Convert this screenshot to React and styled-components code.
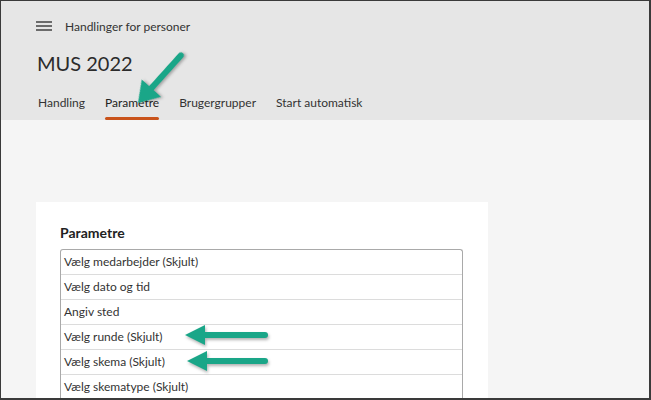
import React from 'react'
import styled, { createGlobalStyle } from 'styled-components'

const Global = createGlobalStyle`
  html, body { margin: 0; padding: 0; }
  body {
    font-family: Lato, "Liberation Sans", sans-serif;
    color: #333;
  }
`

const tabs = ['Handling', 'Parametre', 'Brugergrupper', 'Start automatisk']
const params = [
  'Vælg medarbejder (Skjult)',
  'Vælg dato og tid',
  'Angiv sted',
  'Vælg runde (Skjult)',
  'Vælg skema (Skjult)',
  'Vælg skematype (Skjult)',
]

function Arrow({ x, y, length, angle = 0, head = 20 }) {
  const h = head / 2
  return (
    <ArrowSvg
      width={length + 6}
      height={26}
      style={{ left: x - 2, top: y - 13, transform: `rotate(${angle}deg)` }}
    >
      <line x1="20" y1="13" x2={length - 1} y2="13" />
      <polygon points={`2,13 22,${13 - h} 22,${13 + h}`} />
    </ArrowSvg>
  )
}

function App() {
  return (
    <>
      <Global />
      <Frame>
        <Header>
          <TopBar>
            <Burger>
              <span />
              <span />
              <span />
            </Burger>
            <TopLabel>Handlinger for personer</TopLabel>
          </TopBar>
          <Title>MUS 2022</Title>
          <Tabs>
            {tabs.map((t) => (
              <Tab key={t} active={t === 'Parametre'}>
                <span>{t}</span>
                <Underline active={t === 'Parametre'} />
              </Tab>
            ))}
          </Tabs>
        </Header>
        <Body>
          <Card>
            <CardTitle>Parametre</CardTitle>
            <List>
              {params.map((p) => (
                <Row key={p}>{p}</Row>
              ))}
            </List>
          </Card>
        </Body>
        <Arrow x={137} y={102} length={67} angle={-48} head={26} />
        <Arrow x={184} y={334} length={83} />
        <Arrow x={186} y={360} length={81} />
      </Frame>
    </>
  )
}

const Frame = styled.div`
  position: relative;
  width: 651px;
  height: 400px;
  box-sizing: border-box;
  border-top: 1px solid #3a3a3a;
  border-left: 1px solid #3a3a3a;
  border-right: 2px solid #3a3a3a;
  border-bottom: 2px solid #3a3a3a;
  background: #f5f5f5;
  overflow: hidden;
  display: flex;
  flex-direction: column;
`

const Header = styled.div`
  background: #e6e6e6;
  padding-left: 35px;
  height: 119px;
  flex-shrink: 0;
  display: flex;
  flex-direction: column;
`

const TopBar = styled.div`
  height: 48px;
  padding-top: 2px;
  box-sizing: border-box;
  display: flex;
  align-items: center;
  gap: 13px;
`

const Burger = styled.div`
  width: 16px;
  display: flex;
  flex-direction: column;
  gap: 2px;
  & span {
    height: 2px;
    background: #6b6b6b;
  }
`

const TopLabel = styled.div`
  font-size: 12px;
  color: #333;
`

const Title = styled.div`
  height: 30px;
  line-height: 28px;
  font-size: 20px;
  padding-left: 1px;
  color: #2b2b2b;
`

const Tabs = styled.div`
  display: flex;
  gap: 20px;
  flex: 1;
  padding-left: 2px;
`

const Tab = styled.div`
  display: flex;
  flex-direction: column;
  padding-top: 15px;
  font-size: 12px;
  line-height: 18px;
  color: ${(p) => (p.active ? '#222' : '#333')};
`

const Underline = styled.div`
  margin-top: auto;
  height: 3px;
  border-radius: 2px;
  background: ${(p) => (p.active ? '#c9531b' : 'transparent')};
`

const Body = styled.div`
  flex: 1;
  padding: 82px 0 0 35px;
`

const Card = styled.div`
  width: 452px;
  height: 100%;
  background: #fff;
  box-sizing: border-box;
  padding: 22px 25px 0 24px;
`

const CardTitle = styled.div`
  font-size: 14px;
  font-weight: 700;
  line-height: 18px;
  color: #222;
  margin-bottom: 7px;
`

const List = styled.div`
  border: 1px solid #a9a9a9;
  border-bottom: none;
  border-radius: 3px 3px 0 0;
`

const Row = styled.div`
  height: 24px;
  line-height: 24px;
  padding-left: 3px;
  font-size: 12px;
  color: #333;
  border-bottom: 1px solid #dcdcdc;
`

const ArrowSvg = styled.svg`
  position: absolute;
  transform-origin: 2px 13px;
  overflow: visible;
  filter: drop-shadow(1px 2px 1.5px rgba(0, 0, 0, 0.3));
  & line {
    stroke: #1aa688;
    stroke-width: 6;
    stroke-linecap: round;
  }
  & polygon {
    fill: #1aa688;
  }
`

export default App
